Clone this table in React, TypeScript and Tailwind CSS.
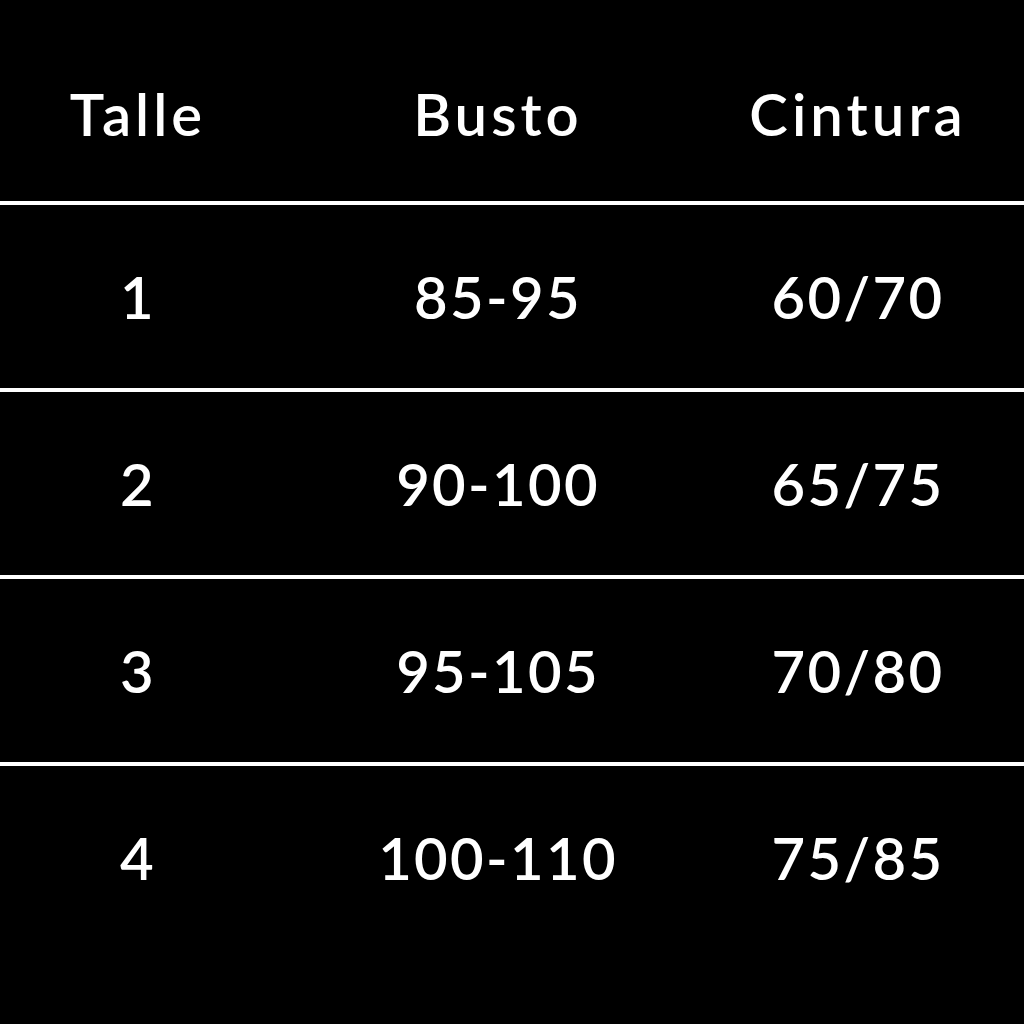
const HEADERS = ['Talle', 'Busto', 'Cintura']

const ROWS = [
  ['1', '85-95', '60/70'],
  ['2', '90-100', '65/75'],
  ['3', '95-105', '70/80'],
  ['4', '100-110', '75/85'],
]

const COLS = 'grid grid-cols-[276px_444px_276px] items-center text-center'

export default function App() {
  return (
    <div className="w-[1024px] h-[1024px] bg-black text-white overflow-hidden font-['Lato',sans-serif] font-semibold text-[58px]">
      {/* Header */}
      <div className={`${COLS} h-[201px] pt-[26px] tracking-[0.07em]`}>
        {HEADERS.map((h) => (
          <div key={h} className="leading-none">{h}</div>
        ))}
      </div>

      {ROWS.map((row, i) => (
        <div key={i} className={`${COLS} h-[187px] border-t-4 border-white tracking-[0.04em]`}>
          {row.map((cell, j) => (
            <div key={j} className="leading-none">{cell}</div>
          ))}
        </div>
      ))}
    </div>
  )
}
